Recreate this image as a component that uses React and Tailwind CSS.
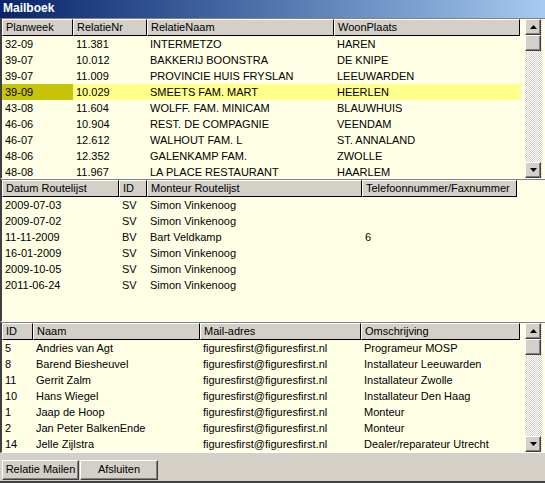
import React from "react";

const F = { fontFamily: '"Liberation Sans", Arial, sans-serif' };

function Arrow({ up }) {
  return (
    <div className="w-[16px] h-[16px] bg-[#d4d0c8] border border-t-white border-l-white border-r-[#404040] border-b-[#404040] flex items-center justify-center shrink-0 shadow-[inset_-1px_-1px_0_#808080]">
      <svg width="7" height="4" viewBox="0 0 7 4">
        {up ? <polygon points="3.5,0 7,4 0,4" fill="#000" /> : <polygon points="0,0 7,0 3.5,4" fill="#000" />}
      </svg>
    </div>
  );
}

function ScrollBar() {
  return (
    <div className="w-[17px] flex flex-col bg-[repeating-conic-gradient(#d4d0c8_0_25%,#ffffff_0_50%)] bg-[length:2px_2px]">
      <Arrow up />
      <div className="w-[16px] h-[16px] bg-[#d4d0c8] border border-t-white border-l-white border-r-[#404040] border-b-[#404040] shadow-[inset_-1px_-1px_0_#808080]" />
      <div className="flex-1" />
      <Arrow />
    </div>
  );
}

function Header({ cols }) {
  return (
    <div className="flex h-[17px] shrink-0">
      {cols.map((c, i) => (
        <div
          key={i}
          style={{ width: c.w }}
          className="shrink-0 bg-[#d4d0c8] border border-t-white border-l-white border-r-black border-b-black pl-[3px] text-[11px] leading-[15px] text-black whitespace-nowrap overflow-hidden"
        >
          {c.t}
        </div>
      ))}
    </div>
  );
}

function Row({ cols, cells, hl }) {
  return (
    <div className={`flex h-[16px] shrink-0 ${hl ? "bg-[#ffff8c]" : ""}`}>
      {cols.map((c, i) => (
        <div
          key={i}
          style={{ width: c.w }}
          className={`shrink-0 pl-[3px] text-[11px] leading-[16px] text-black whitespace-nowrap overflow-hidden ${hl && i === 0 ? "bg-[#c8c40a]" : ""}`}
        >
          {cells[i]}
        </div>
      ))}
    </div>
  );
}

function Grid({ cols, rows, hlIndex, scroll, h }) {
  return (
    <div style={{ height: h }} className="flex shrink-0 bg-[#ffffe6] border-l-2 border-t border-l-[#404040] border-t-[#808080] border-b border-b-white overflow-hidden">
      <div className="flex-1 flex flex-col overflow-hidden">
        <Header cols={cols} />
        {rows.map((r, i) => (
          <Row key={i} cols={cols} cells={r} hl={i === hlIndex} />
        ))}
      </div>
      {scroll ? (
        <div className="flex pl-[4px] pr-[3px]">
          <ScrollBar />
        </div>
      ) : null}
    </div>
  );
}

const c1 = [
  { t: "Planweek", w: 71 },
  { t: "RelatieNr", w: 74 },
  { t: "RelatieNaam", w: 187 },
  { t: "WoonPlaats", w: 186 },
];
const r1 = [
  ["32-09", "11.381", "INTERMETZO", "HAREN"],
  ["39-07", "10.012", "BAKKERIJ BOONSTRA", "DE KNIPE"],
  ["39-07", "11.009", "PROVINCIE HUIS FRYSLAN", "LEEUWARDEN"],
  ["39-09", "10.029", "SMEETS FAM. MART", "HEERLEN"],
  ["43-08", "11.604", "WOLFF. FAM.  MINICAM", "BLAUWHUIS"],
  ["46-06", "10.904", "REST. DE COMPAGNIE", "VEENDAM"],
  ["46-07", "12.612", "WALHOUT FAM. L", "ST. ANNALAND"],
  ["48-06", "12.352", "GALENKAMP FAM.", "ZWOLLE"],
  ["48-08", "11.967", "LA PLACE RESTAURANT", "HAARLEM"],
];

const c2 = [
  { t: "Datum Routelijst", w: 117 },
  { t: "ID", w: 28 },
  { t: "Monteur Routelijst", w: 215 },
  { t: "Telefoonnummer/Faxnummer", w: 155 },
];
const r2 = [
  ["2009-07-03", "SV", "Simon Vinkenoog", ""],
  ["2009-07-02", "SV", "Simon Vinkenoog", ""],
  ["11-11-2009", "BV", "Bart Veldkamp", "6"],
  ["16-01-2009", "SV", "Simon Vinkenoog", ""],
  ["2009-10-05", "SV", "Simon Vinkenoog", ""],
  ["2011-06-24", "SV", "Simon Vinkenoog", ""],
];

const c3 = [
  { t: "ID", w: 31 },
  { t: "Naam", w: 167 },
  { t: "Mail-adres", w: 161 },
  { t: "Omschrijving", w: 159 },
];
const r3 = [
  ["5", "Andries van Agt", "figuresfirst@figuresfirst.nl", "Programeur MOSP"],
  ["8", "Barend Biesheuvel", "figuresfirst@figuresfirst.nl", "Installateur Leeuwarden"],
  ["11", "Gerrit Zalm", "figuresfirst@figuresfirst.nl", "Installateur Zwolle"],
  ["10", "Hans Wiegel", "figuresfirst@figuresfirst.nl", "Installateur Den Haag"],
  ["1", "Jaap de Hoop", "figuresfirst@figuresfirst.nl", "Monteur"],
  ["2", "Jan Peter BalkenEnde", "figuresfirst@figuresfirst.nl", "Monteur"],
  ["14", "Jelle Zijlstra", "figuresfirst@figuresfirst.nl", "Dealer/reparateur Utrecht"],
];

function Btn({ children, w }) {
  return (
    <div
      style={{ width: w }}
      className="h-[20px] shrink-0 bg-[#d4d0c8] border border-t-white border-l-white border-r-[#404040] border-b-[#404040] shadow-[inset_-1px_-1px_0_#808080] text-[11px] leading-[17px] text-black text-center whitespace-nowrap"
    >
      {children}
    </div>
  );
}

export default function App() {
  return (
    <div style={F} className="w-[545px] h-[483px] bg-[#d4d0c8] flex flex-col overflow-hidden">
      <div className="h-[18px] shrink-0 bg-gradient-to-r from-[#0a246a] to-[#a6caf0] pl-[3px] text-white font-bold text-[12px] leading-[17px]">
        Mailboek
      </div>
      <Grid cols={c1} rows={r1} hlIndex={3} scroll h={161} />
      <Grid cols={c2} rows={r2} h={143} />
      <Grid cols={c3} rows={r3} scroll h={131} />
      <div className="flex-1 flex flex-col border-b-2 border-b-[#404040]">
        <div className="flex gap-[1px] pl-[2px] pt-[7px]">
          <Btn w={77}>Relatie Mailen</Btn>
          <Btn w={78}>Afsluiten</Btn>
        </div>
      </div>
    </div>
  );
}
